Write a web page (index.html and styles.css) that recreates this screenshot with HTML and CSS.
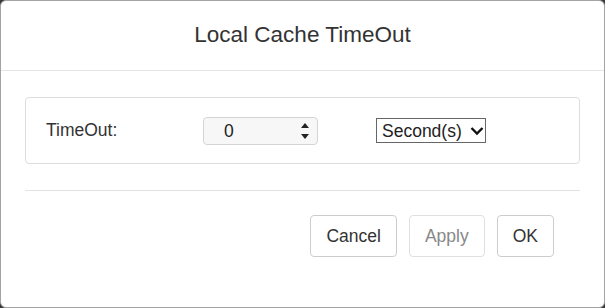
FILE: index.html
```html
<!DOCTYPE html>
<html lang="en">
<head>
    <meta charset="UTF-8">
    <title>Local Cache TimeOut</title>
    <link rel="stylesheet" href="styles.css">
</head>
<body>
    <div class="dialog">
        <div class="dialog-header">
            <h4 class="dialog-title">Local Cache TimeOut</h4>
        </div>
        <div class="dialog-body">
            <div class="panel">
                <label class="field-label" for="timeout">TimeOut:</label>
                <div class="spin-box">
                    <input type="text" id="timeout" class="spin-input" value="0">
                    <svg class="spin-arrows" width="10" height="20" viewBox="0 0 10 20">
                        <path d="M1 7 L5 2 L9 7 Z" fill="#222"/>
                        <path d="M1 13 L5 18 L9 13 Z" fill="#222"/>
                    </svg>
                </div>
                <div class="unit-select">
                    <select class="unit-native">
                        <option>Second(s)</option>
                        <option>Minute(s)</option>
                        <option>Hour(s)</option>
                    </select>
                    <svg class="chevron" width="14" height="10" viewBox="0 0 14 10">
                        <path d="M1.5 2 L7 7.5 L12.5 2" fill="none" stroke="#111" stroke-width="2.4"/>
                    </svg>
                </div>
            </div>
            <hr class="divider">
        </div>
        <div class="dialog-footer">
            <button class="btn">Cancel</button>
            <button class="btn" disabled>Apply</button>
            <button class="btn">OK</button>
        </div>
    </div>
</body>
</html>
```

FILE: styles.css
```css
html, body { margin: 0; padding: 0; }
body { background: #3a3a3a; font-family: "Liberation Sans", Arial, sans-serif; color: #333; }
.dialog { width: 605px; height: 308px; box-sizing: border-box; background: #fff; border: 1px solid #a3a3a3; border-radius: 6px; overflow: hidden; }
.dialog-header { height: 69px; border-bottom: 1px solid #e5e5e5; display: flex; align-items: center; justify-content: center; }
.dialog-title { margin: 0; font-size: 22.5px; font-weight: normal; color: #333; padding-bottom: 1px; }
.dialog-body { padding: 26px 24px 0 24px; }
.panel { height: 65px; border: 1px solid #ddd; border-radius: 4px; display: flex; align-items: center; padding-left: 20px; }
.field-label { font-size: 17.5px; width: 157px; flex-shrink: 0; }
.spin-box { width: 113px; height: 26px; border: 1px solid #d4d4d4; border-radius: 4px; background: #f7f7f7; display: flex; align-items: center; flex-shrink: 0; }
.spin-input { width: 60px; border: none; background: transparent; font-family: inherit; font-size: 17.5px; color: #222; padding: 2px 0 0 20px; outline: none; }
.spin-arrows { margin-left: auto; margin-right: 7px; flex-shrink: 0; }
.unit-select { margin-left: 58px; width: 108px; height: 23px; border: 1px solid #666; display: flex; align-items: center; background: #fff; flex-shrink: 0; }
.unit-native { appearance: none; -webkit-appearance: none; border: none; background: transparent; font-family: inherit; font-size: 17.5px; color: #222; padding: 0 0 0 5px; width: 92px; outline: none; }
.chevron { margin-left: 1px; flex-shrink: 0; }
.divider { border: none; border-top: 1px solid #e2e2e2; margin: 26px 0 0 0; }
.dialog-footer { display: flex; justify-content: flex-end; gap: 12px; padding: 24px 50px 0 0; }
.btn { height: 42px; padding: 0 15px; font-family: inherit; font-size: 17.5px; color: #333; background: #fff; border: 1px solid #ccc; border-radius: 4px; }
.btn:disabled { color: #888; border-color: #e0e0e0; }
```
